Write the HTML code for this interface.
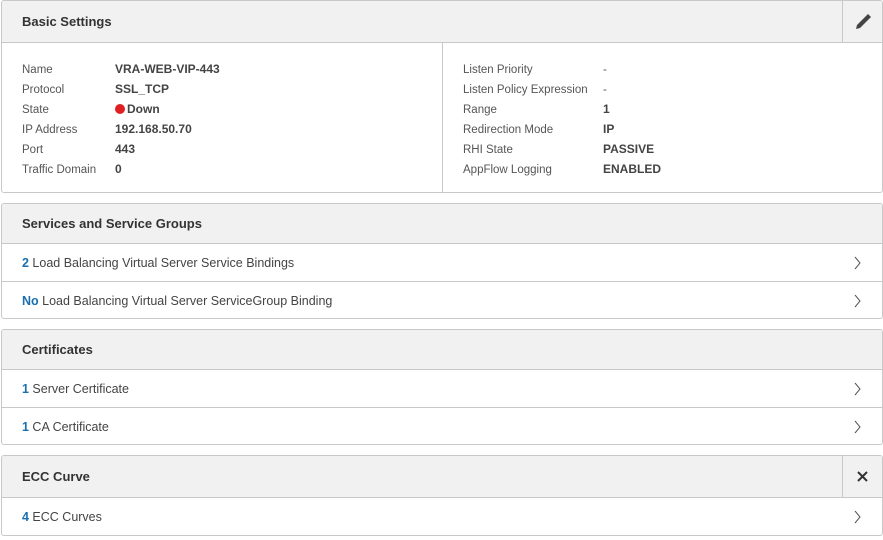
<!DOCTYPE html>
<html><head><style>
body{margin:0;width:883px;height:540px;background:#fff;font-family:"Liberation Sans",sans-serif;color:#555;position:relative;overflow:hidden}
.p{position:absolute;left:1px;width:882px;border:1px solid #c8c8c8;border-radius:3px;box-sizing:border-box;overflow:hidden}
.h{background:#f1f1f1;border-bottom:1px solid #c8c8c8;font-weight:bold;font-size:13px;color:#333;padding-left:20px;box-sizing:border-box;position:relative}
.r{height:37px;line-height:38px;font-size:12.5px;padding-left:20px;border-bottom:1px solid #c8c8c8;position:relative;color:#444}
.r:last-child{border-bottom:none}
.r b{color:#1a6fb0}
.ch{position:absolute;right:20px;top:12px}
.l{position:absolute;font-size:11.5px;color:#555}
.v{position:absolute;font-size:12px;font-weight:bold;color:#444}
</style></head><body>
<div class="p" style="top:0;height:193px">
<div class="h" style="height:42px;line-height:41px">Basic Settings
<div style="position:absolute;right:0;top:0;width:39px;height:41px;border-left:1px solid #c8c8c8">
<svg width="39" height="41"><path d="M13 28 L14 24 L25 13 L28 16 L17 27 Z" fill="#444"/></svg></div></div>
<div style="position:absolute;left:440px;top:42px;width:1px;height:150px;background:#c8c8c8"></div>
<div class="l" style="left:20px;top:63px">Name</div><div class="v" style="left:113px;top:61px">VRA-WEB-VIP-443</div>
<div class="l" style="left:20px;top:83px">Protocol</div><div class="v" style="left:113px;top:81px">SSL_TCP</div>
<div class="l" style="left:20px;top:103px">State</div><div class="v" style="left:113px;top:101px"><span style="display:inline-block;width:10px;height:10px;border-radius:50%;background:#e02020;vertical-align:-1px;margin-right:2px"></span>Down</div>
<div class="l" style="left:20px;top:123px">IP Address</div><div class="v" style="left:113px;top:121px">192.168.50.70</div>
<div class="l" style="left:20px;top:143px">Port</div><div class="v" style="left:113px;top:141px">443</div>
<div class="l" style="left:20px;top:163px">Traffic Domain</div><div class="v" style="left:113px;top:161px">0</div>
<div class="l" style="left:461px;top:63px">Listen Priority</div><div class="l" style="left:601px;top:63px">-</div>
<div class="l" style="left:461px;top:83px">Listen Policy Expression</div><div class="l" style="left:601px;top:83px">-</div>
<div class="l" style="left:461px;top:103px">Range</div><div class="v" style="left:601px;top:101px">1</div>
<div class="l" style="left:461px;top:123px">Redirection Mode</div><div class="v" style="left:601px;top:121px">IP</div>
<div class="l" style="left:461px;top:143px">RHI State</div><div class="v" style="left:601px;top:141px">PASSIVE</div>
<div class="l" style="left:461px;top:163px">AppFlow Logging</div><div class="v" style="left:601px;top:161px">ENABLED</div>
</div>
<div class="p" style="top:203px;height:116px">
<div class="h" style="height:40px;line-height:40px">Services and Service Groups</div>
<div class="r"><b>2</b> Load Balancing Virtual Server Service Bindings<svg class="ch" width="10" height="14"><path d="M3 1 L8 7 L3 13" stroke="#555" fill="none"/></svg></div>
<div class="r"><b>No</b> Load Balancing Virtual Server ServiceGroup Binding<svg class="ch" width="10" height="14"><path d="M3 1 L8 7 L3 13" stroke="#555" fill="none"/></svg></div>
</div>
<div class="p" style="top:329px;height:116px">
<div class="h" style="height:40px;line-height:40px">Certificates</div>
<div class="r"><b>1</b> Server Certificate<svg class="ch" width="10" height="14"><path d="M3 1 L8 7 L3 13" stroke="#555" fill="none"/></svg></div>
<div class="r"><b>1</b> CA Certificate<svg class="ch" width="10" height="14"><path d="M3 1 L8 7 L3 13" stroke="#555" fill="none"/></svg></div>
</div>
<div class="p" style="top:455px;height:81px">
<div class="h" style="height:42px;line-height:41px">ECC Curve
<div style="position:absolute;right:0;top:0;width:39px;height:41px;border-left:1px solid #c8c8c8">
<svg width="39" height="41"><path d="M15 16 L24 25 M24 16 L15 25" stroke="#333" stroke-width="2"/></svg></div></div>
<div class="r"><b>4</b> ECC Curves<svg class="ch" width="10" height="14"><path d="M3 1 L8 7 L3 13" stroke="#555" fill="none"/></svg></div>
</div>
</body></html>
